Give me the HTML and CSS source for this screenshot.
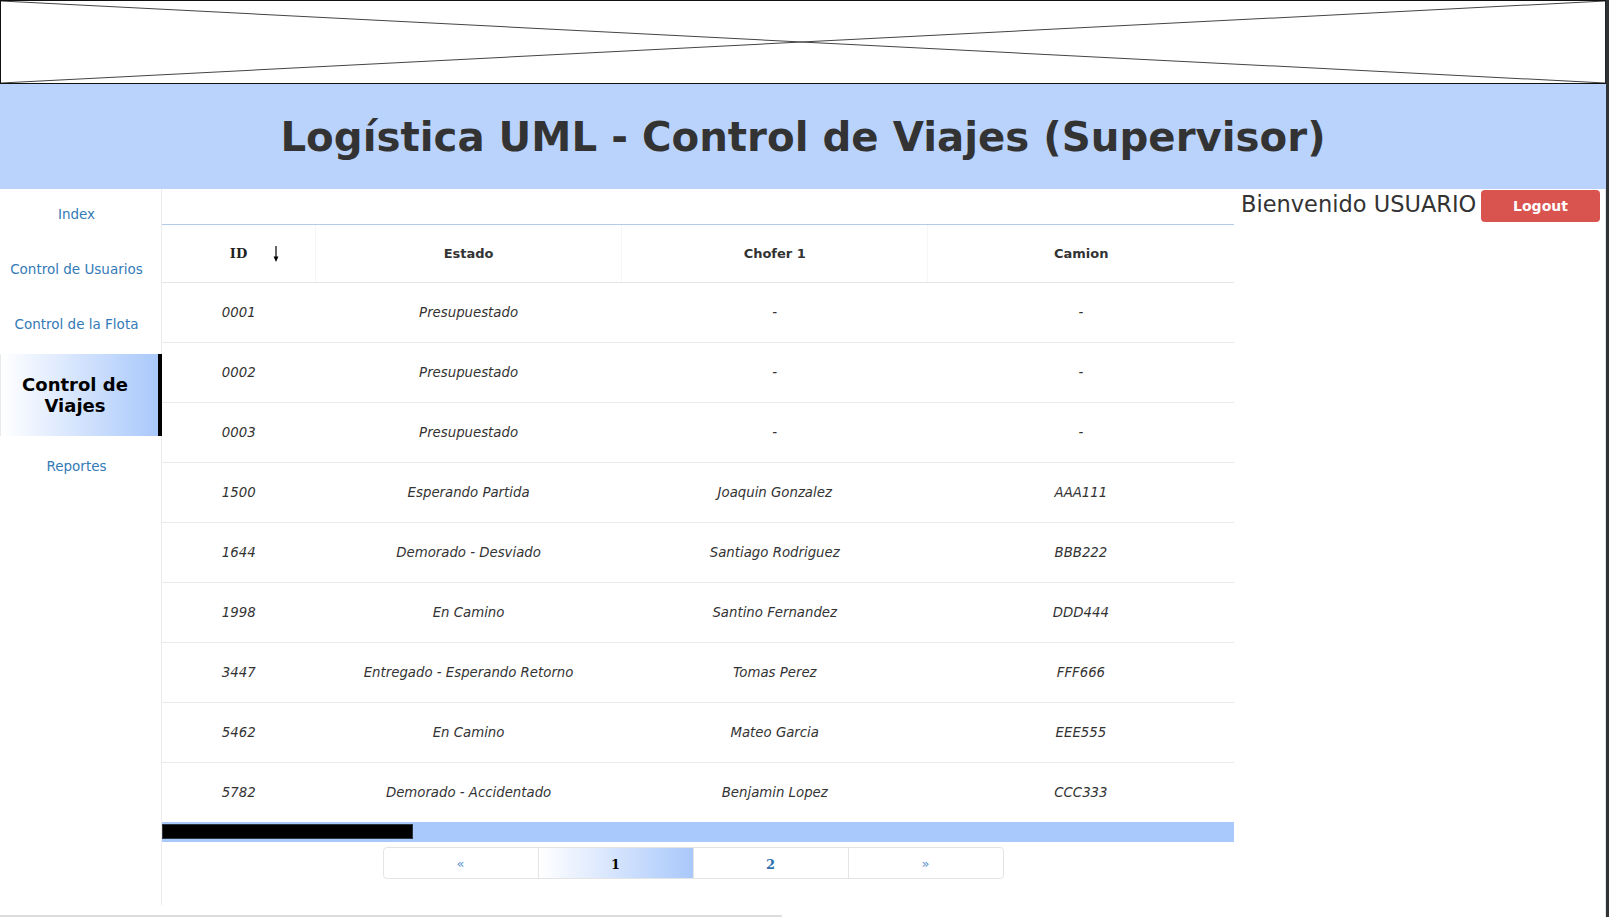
FILE: index.html
```html
<!DOCTYPE html>
<html lang="es">
<head>
<meta charset="utf-8">
<title>Logística UML - Control de Viajes</title>
<link rel="stylesheet" href="styles.css">
</head>
<body>
<div class="page">
  <div class="placeholder">
    <svg class="placeholder-x" viewBox="0 0 100 100" preserveAspectRatio="none">
      <line x1="0" y1="0" x2="100" y2="100" vector-effect="non-scaling-stroke"/>
      <line x1="0" y1="100" x2="100" y2="0" vector-effect="non-scaling-stroke"/>
    </svg>
  </div>
  <header class="banner">
    <h1 class="banner-title">Logística UML - Control de Viajes (Supervisor)</h1>
  </header>
  <div class="content">
    <nav class="sidebar">
      <a class="side-link" href="#">Index</a>
      <a class="side-link" href="#">Control de Usuarios</a>
      <a class="side-link" href="#">Control de la Flota</a>
      <a class="side-link side-active" href="#">Control de<br>Viajes</a>
      <a class="side-link side-after" href="#">Reportes</a>
    </nav>
    <main class="main">
      <div class="main-top"></div>
      <table class="trips">
        <thead>
          <tr>
            <th class="col-id"><span class="th-id">ID</span>
              <svg class="sort-arrow" viewBox="0 0 8 16" width="8" height="16"><path d="M4 0V13" stroke="#000" stroke-width="1.2"/><path d="M1.6 10.5H6.4L4 16Z" fill="#000"/></svg>
            </th>
            <th class="col-wide">Estado</th>
            <th class="col-wide">Chofer 1</th>
            <th class="col-wide">Camion</th>
          </tr>
        </thead>
        <tbody>
          <tr><td>0001</td><td>Presupuestado</td><td>-</td><td>-</td></tr>
          <tr><td>0002</td><td>Presupuestado</td><td>-</td><td>-</td></tr>
          <tr><td>0003</td><td>Presupuestado</td><td>-</td><td>-</td></tr>
          <tr><td>1500</td><td>Esperando Partida</td><td>Joaquin Gonzalez</td><td>AAA111</td></tr>
          <tr><td>1644</td><td>Demorado - Desviado</td><td>Santiago Rodriguez</td><td>BBB222</td></tr>
          <tr><td>1998</td><td>En Camino</td><td>Santino Fernandez</td><td>DDD444</td></tr>
          <tr><td>3447</td><td>Entregado - Esperando Retorno</td><td>Tomas Perez</td><td>FFF666</td></tr>
          <tr><td>5462</td><td>En Camino</td><td>Mateo Garcia</td><td>EEE555</td></tr>
          <tr><td>5782</td><td>Demorado - Accidentado</td><td>Benjamin Lopez</td><td>CCC333</td></tr>
        </tbody>
      </table>
      <div class="hscroll"><div class="hscroll-thumb"></div></div>
      <nav class="pager">
        <a class="pager-item pager-arrow" href="#">«</a>
        <a class="pager-item pager-current" href="#">1</a>
        <a class="pager-item pager-num" href="#">2</a>
        <a class="pager-item pager-arrow" href="#">»</a>
      </nav>
    </main>
    <aside class="user">
      <span class="welcome">Bienvenido USUARIO</span>
      <button class="logout" type="button">Logout</button>
    </aside>
  </div>
  <div class="bottom-bar"></div>
</div>
</body>
</html>
```

FILE: styles.css
```css
html, body {
  margin: 0;
  padding: 0;
  background: #fff;
  overflow: hidden;
}

.page {
  width: 1606px;
  height: 917px;
  border-right: 3px solid #2f3336;
  box-shadow: inset -1px 0 0 #e6e6e6;
  display: flex;
  flex-direction: column;
  font-family: "DejaVu Sans", Verdana, sans-serif;
  color: #333;
}

.placeholder {
  height: 84px;
  box-sizing: border-box;
  border: 1px solid #111;
  border-right-color: #222;
  flex: none;
}

.placeholder-x {
  display: block;
  width: 100%;
  height: 100%;
}

.placeholder-x line {
  stroke: #444;
  stroke-width: 1;
}

.banner {
  height: 105px;
  box-sizing: border-box;
  padding-top: 4px;
  flex: none;
  background: #bad3fc;
  display: flex;
  align-items: center;
  justify-content: center;
}

.banner-title {
  margin: 0;
  font-family: "DejaVu Sans", Verdana, sans-serif;
  font-weight: bold;
  font-size: 40.3px;
  color: #333;
  line-height: 1;
}

.content {
  display: flex;
  height: 716px;
  flex: none;
}

.sidebar {
  width: 161px;
  border-right: 1px solid #ececec;
  display: flex;
  flex-direction: column;
  flex: none;
}

.side-link {
  display: block;
  text-align: center;
  color: #337ab7;
  text-decoration: none;
  font-size: 13.5px;
  line-height: 20px;
  padding: 15px 8px 20px 0;
}

.side-active {
  height: 82px;
  box-sizing: border-box;
  padding: 0 9px 0 0;
  margin-right: -1px;
  display: flex;
  align-items: center;
  justify-content: center;
  text-align: center;
  color: #000;
  font-weight: bold;
  font-size: 18px;
  line-height: 21px;
  background: linear-gradient(to right, #ffffff, #a9c8fb);
  border-right: 4px solid #000;
  border-left: 1px solid #e9e9e9;
}

.side-after {
  padding-top: 20px;
}

.main {
  width: 1072px;
  flex: none;
  display: flex;
  flex-direction: column;
}

.main-top {
  height: 35px;
  border-bottom: 1px solid #b3cae9;
}

.trips {
  width: 1072px;
  border-collapse: collapse;
  table-layout: fixed;
}

.trips th {
  position: relative;
  height: 57px;
  padding: 0;
  font-size: 13px;
  font-weight: bold;
  color: #333;
  text-align: center;
  border-bottom: 1px solid #e6e6e6;
  border-left: 1px solid #f6f6f6;
}

.trips th:first-child {
  border-left: none;
}

.col-id {
  width: 153px;
}

.th-id {
  font-family: "DejaVu Serif", Georgia, serif;
  color: #222;
}

.sort-arrow {
  position: absolute;
  left: 110px;
  top: 21px;
}

.trips td {
  height: 59px;
  padding: 0;
  text-align: center;
  font-style: italic;
  font-size: 13.3px;
  color: #333;
  border-bottom: 1px solid #e9e9e9;
}

.trips tbody tr:last-child td {
  border-bottom: none;
}

.hscroll {
  height: 20px;
  background: #a9c8fb;
  box-sizing: border-box;
  padding: 2px 0 3px;
}

.hscroll-thumb {
  width: 251px;
  height: 15px;
  box-sizing: border-box;
  background: #000;
  border: 1px solid #2d3540;
}

.pager {
  display: flex;
  align-self: center;
  margin: 5px 10px 0 0;
  border: 1px solid #e4e4e4;
  border-radius: 4px;
  height: 32px;
  box-sizing: border-box;
}

.pager-item {
  width: 154px;
  display: flex;
  align-items: center;
  justify-content: center;
  text-decoration: none;
  font-family: "DejaVu Serif", Georgia, serif;
  font-weight: bold;
  font-size: 13px;
  border-left: 1px solid #e4e4e4;
}

.pager-item:first-child {
  border-left: none;
}

.pager-arrow {
  color: #5a93cb;
  font-family: "DejaVu Sans", sans-serif;
  font-weight: normal;
  font-size: 13px;
}

.pager-current {
  color: #000;
  background: linear-gradient(to right, #ffffff, #a9c8fb);
  padding-top: 2px;
}

.pager-num {
  color: #2a6fb0;
  padding-top: 2px;
}

.user {
  flex: 1;
  display: flex;
  align-items: flex-start;
  padding: 0 6px 0 7px;
}

.welcome {
  font-size: 22.5px;
  line-height: 26px;
  margin-top: 2px;
  color: #333;
  white-space: nowrap;
}

.logout {
  margin-left: auto;
  margin-top: 1px;
  width: 119px;
  height: 32px;
  border: none;
  border-radius: 4px;
  background: #d9534f;
  color: #fff;
  font-family: "DejaVu Sans", Verdana, sans-serif;
  font-weight: bold;
  font-size: 14px;
}

.bottom-bar {
  margin-top: 10px;
  width: 782px;
  height: 2px;
  background: #dcdcdc;
  border-radius: 0 2px 2px 0;
}
```
